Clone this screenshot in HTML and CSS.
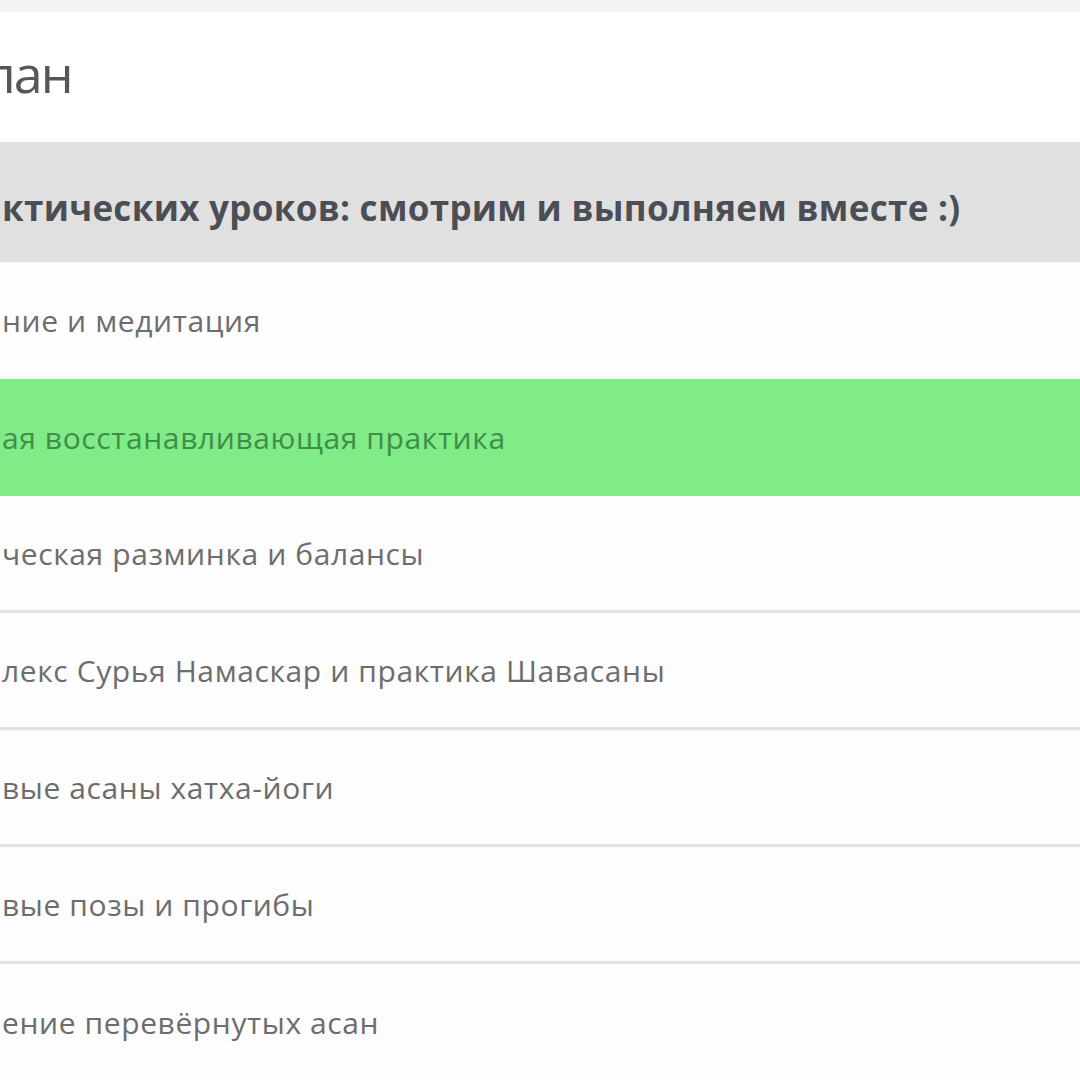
FILE: index.html
```html
<!DOCTYPE html>
<html lang="ru">
<head>
<meta charset="utf-8">
<link rel="stylesheet" href="styles.css">
</head>
<body>
<div class="page">
  <div class="topbar"></div>
  <h1 class="title"><span class="title-text">лан</span></h1>
  <div class="section-head">ктических уроков: смотрим и выполняем вместе :)</div>
  <ul class="lessons">
    <li class="row">ние и медитация</li>
    <li class="row row-active">ая восстанавливающая практика</li>
    <li class="row row-line">ческая разминка и балансы</li>
    <li class="row row-line">лекс Сурья Намаскар и практика Шавасаны</li>
    <li class="row row-line">вые асаны хатха-йоги</li>
    <li class="row row-line">вые позы и прогибы</li>
    <li class="row">ение перевёрнутых асан</li>
  </ul>
</div>
</body>
</html>
```
FILE: styles.css
```css
html, body {
  margin: 0;
  padding: 0;
  background: #fdfdfd;
  overflow: hidden;
}
.page {
  width: 1080px;
  height: 1080px;
  overflow: hidden;
  font-family: "Open Sans", "DejaVu Sans", sans-serif;
}
.topbar {
  height: 12px;
  background: #f2f2f2;
}
.title {
  margin: 0;
  height: 130px;
  display: flex;
  align-items: center;
  font-size: 52px;
  font-weight: 400;
  color: #555759;
  background: #ffffff;
  white-space: nowrap;
  padding-bottom: 10px;
  box-sizing: border-box;
  overflow: hidden;
}
.title-text {
  letter-spacing: -2px;
  margin-left: -14px;
}
.section-head {
  height: 120px;
  display: flex;
  align-items: center;
  background: #e0e0e0;
  font-size: 35px;
  font-weight: 700;
  letter-spacing: 0.3px;
  color: #4b4e55;
  white-space: nowrap;
  padding-left: 2px;
  padding-top: 10px;
  box-sizing: border-box;
}
.lessons {
  list-style: none;
  margin: 0;
  padding: 0;
}
.row {
  height: 117px;
  display: flex;
  align-items: center;
  font-size: 30px;
  letter-spacing: 0.6px;
  color: #6d6d6d;
  white-space: nowrap;
  padding-left: 2px;
  box-sizing: border-box;
  background: #fdfdfd;
}
.row-active {
  background: #7fec87;
  color: #3f8d48;
}
.row-line {
  border-bottom: 3px solid #e2e2e2;
}
```
